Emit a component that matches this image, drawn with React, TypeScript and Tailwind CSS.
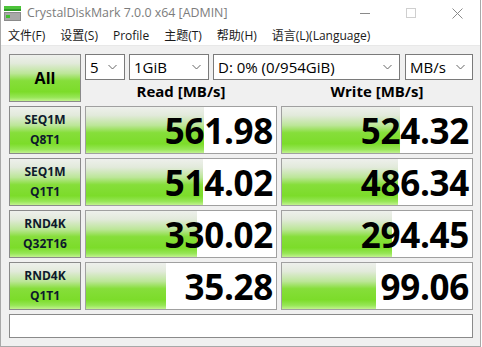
import React from "react";

type Row = {
    line1: string;
    line2: string;
    read: string;
    write: string;
    readBar: number;
    writeBar: number;
};

const rows: Row[] = [
    { line1: "SEQ1M", line2: "Q8T1", read: "561.98", write: "524.32", readBar: 118, writeBar: 118 },
    { line1: "SEQ1M", line2: "Q1T1", read: "514.02", write: "486.34", readBar: 117, writeBar: 116 },
    { line1: "RND4K", line2: "Q32T16", read: "330.02", write: "294.45", readBar: 111, writeBar: 110 },
    { line1: "RND4K", line2: "Q1T1", read: "35.28", write: "99.06", readBar: 80, writeBar: 94 },
];

const green =
    "bg-[linear-gradient(to_bottom,#eef0ec_0%,#e2eadb_18%,#bce698_40%,#86de3a_56%,#7cdc2a_80%,#96e656_92%,#c2f290_100%)]";

function Chevron() {
    return (
        <svg width="9" height="6" viewBox="0 0 9 6" className="shrink-0">
            <polyline points="0.5,1 4.5,5 8.5,1" fill="none" stroke="#666" strokeWidth="1" />
        </svg>
    );
}

function Select({ value, className }: { value: string; className: string }) {
    return (
        <div className={`flex h-[26px] items-center justify-between border border-[#7a7a7a] bg-white pl-[4px] pr-[7px] text-[15px] text-black ${className}`}>
            <span className="leading-none">{value}</span>
            <Chevron />
        </div>
    );
}

function ValueBox({ value, bar }: { value: string; bar: number }) {
    return (
        <div className="relative flex h-[48px] w-[192px] items-center justify-end border border-[#a0a0a0] bg-white pr-[3px]">
            <div className={`absolute left-0 top-0 h-full ${green}`} style={{ width: bar }} />
            <span className="relative text-[35px] font-bold leading-none tracking-[-0.3px] text-black">{value}</span>
        </div>
    );
}

export default function App() {
    return (
        <div className="h-[347px] w-[482px] bg-white font-['Open_Sans','Noto_Sans_CJK_SC',sans-serif]">
            <div className="flex h-[347px] w-[481px] flex-col border-x border-b border-[#a8a8a8]">
                {/* Title bar */}
                <div className="flex h-[26px] items-center bg-white">
                    <svg width="17" height="16" viewBox="0 0 17 16" className="ml-[3px]">
                        <rect x="0" y="1" width="17" height="3" fill="#4cc43a" />
                        <rect x="0" y="4" width="17" height="2" fill="#2e9a26" />
                        <rect x="0" y="7" width="17" height="9" fill="#8a8a8a" />
                        <rect x="1" y="8" width="15" height="7" fill="#a8a8a8" />
                        <rect x="2" y="10" width="4" height="3" fill="#3fbf2e" />
                    </svg>
                    <span className="ml-[6px] text-[12.4px] text-[#7c7c7c]">CrystalDiskMark 7.0.0 x64 [ADMIN]</span>
                    <div className="ml-auto flex items-center">
                        <div className="flex h-[26px] w-[46px] items-center justify-center">
                            <div className="h-px w-[10px] bg-[#8a8a8a]" />
                        </div>
                        <div className="flex h-[26px] w-[46px] items-center justify-center">
                            <div className="h-[10px] w-[10px] border border-[#cfcfcf]" />
                        </div>
                        <div className="flex h-[26px] w-[46px] items-center justify-center">
                            <svg width="11" height="11" viewBox="0 0 11 11">
                                <path d="M0.5 0.5 L10.5 10.5 M10.5 0.5 L0.5 10.5" stroke="#8a8a8a" strokeWidth="1" />
                            </svg>
                        </div>
                    </div>
                </div>

                {/* Menu bar */}
                <div className="flex h-[20px] items-center border-b border-[#e8e8e8] bg-white pl-[7px] text-[12px] text-[#1a1a1a]">
                    {["文件(F)", "设置(S)", "Profile", "主题(T)", "帮助(H)", "语言(L)(Language)"].map((m) => (
                        <span key={m} className="mr-[15px] leading-none">
                            {m}
                        </span>
                    ))}
                </div>

                {/* Main panel */}
                <div className="flex flex-1 flex-col gap-[4px] bg-[#f0f0f0] pb-[8px] pl-[8px] pr-[7px] pt-[8px]">
                    <div className="flex gap-[4px]">
                        <div className={`flex h-[48px] w-[72px] items-center justify-center border border-[#8a8a8a] ${green}`}>
                            <span className="text-[16px] font-bold text-black">All</span>
                        </div>
                        <div className="flex w-[388px] flex-col">
                            <div className="flex">
                                <Select value="5" className="w-[40px]" />
                                <Select value="1GiB" className="ml-[4px] w-[80px]" />
                                <Select value="D: 0% (0/954GiB)" className="ml-[4px] w-[187px]" />
                                <Select value="MB/s" className="ml-[5px] w-[68px]" />
                            </div>
                            <div className="flex h-[22px] items-center gap-[4px] text-[15px] font-bold text-black">
                                <div className="w-[192px] text-center">Read [MB/s]</div>
                                <div className="w-[192px] text-center">Write [MB/s]</div>
                            </div>
                        </div>
                    </div>

                    {rows.map((r, i) => (
                        <div key={i} className="flex gap-[4px]">
                            <div className={`flex h-[48px] w-[72px] flex-col items-center justify-center border border-[#8a8a8a] ${green}`}>
                                <span className="text-[12px] font-bold leading-[20px] text-[#0e1a2c]">{r.line1}</span>
                                <span className="text-[12px] font-bold leading-[20px] text-[#0e1a2c]">{r.line2}</span>
                            </div>
                            <ValueBox value={r.read} bar={r.readBar} />
                            <ValueBox value={r.write} bar={r.writeBar} />
                        </div>
                    ))}

                    <div className="h-[24px] w-[464px] border border-[#8a8a8a] bg-white" />
                </div>
            </div>
        </div>
    );
}
